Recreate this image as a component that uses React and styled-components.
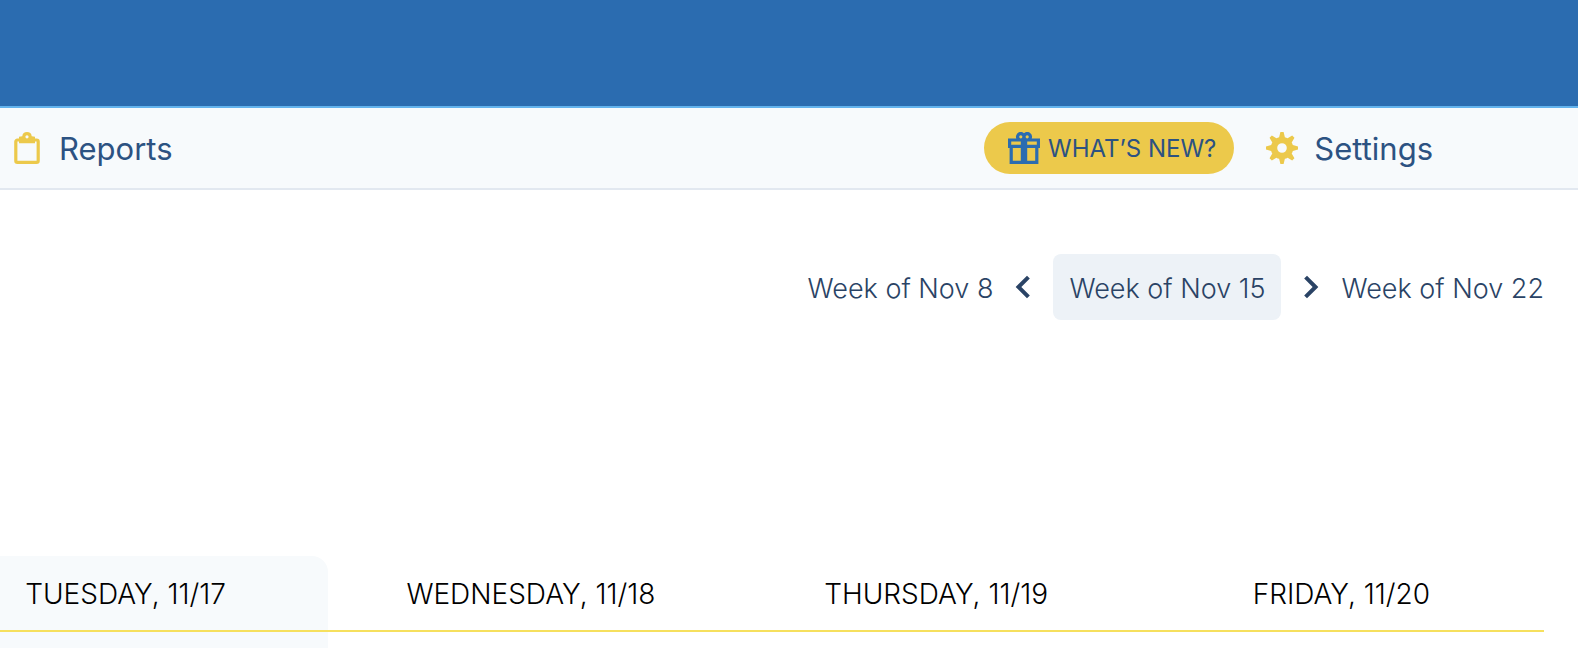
import React from "react";
import styled, { createGlobalStyle } from "styled-components";

const GlobalStyle = createGlobalStyle`
  *, *::before, *::after { box-sizing: border-box; }
  body {
    margin: 0;
    background: #fff;
    color: #000;
    font-family: Inter, "Liberation Sans", sans-serif;
    line-height: 1.5;
  }
  a { color: inherit; text-decoration: none; }
`;

const Page = styled.div`
  height: 100vh;
  display: flex;
  flex-direction: column;
  overflow: hidden;
`;

const Banner = styled.header`
  flex: none;
  height: 108px;
  background: #2b6cb0;
  border-bottom: 2px solid #63b3ed;
`;

const NavBar = styled.nav`
  flex: none;
  display: flex;
  align-items: center;
  justify-content: space-between;
  height: 82px;
  padding: 0 145px 0 11px;
  background: #f7fafc;
  border-bottom: 2px solid #e2e8f0;
`;

const NavGroup = styled.div`
  display: flex;
  align-items: center;
  gap: 32px;
`;

const NavLink = styled.a`
  display: flex;
  align-items: center;
  gap: 16px;
  color: #2c5282;
  font-size: 31px;
  line-height: 48px;
`;

const Label = styled.span`
  padding-top: 2px;
`;

const Icon = styled.svg.attrs({ viewBox: "0 0 20 20", "aria-hidden": true })`
  flex: none;
  width: ${({ $size = 32 }) => $size}px;
  height: ${({ $size = 32 }) => $size}px;
  fill: ${({ $color = "currentColor" }) => $color};
`;

const NewsButton = styled.button`
  display: flex;
  align-items: center;
  gap: 8px;
  height: 52px;
  padding: 0 18px 0 24px;
  border: 0;
  border-radius: 26px;
  background: #ecc94b;
  color: #2c5282;
  font: inherit;
  font-size: 24px;
  text-transform: uppercase;
  white-space: nowrap;
`;

const Main = styled.main`
  flex: 1;
  display: flex;
  flex-direction: column;
  padding: 64px 34px 0 0;
`;

const WeekPicker = styled.div`
  display: flex;
  align-items: center;
  justify-content: flex-end;
  gap: 10px;
  margin-bottom: 236px;
  color: #2a4365;
  font-size: 27px;
  font-weight: 300;
  line-height: 40px;
  white-space: nowrap;
`;

const WeekLink = styled.a`
  padding: 15px 0 11px;
`;

const CurrentWeek = styled.span`
  padding: 15px 16px 11px;
  border-radius: 8px;
  background: #edf2f7;
`;

const Schedule = styled.div`
  flex: 1;
  display: flex;
  margin-left: -77px;
`;

const DayTable = styled.table`
  width: 100%;
  table-layout: fixed;
  border-collapse: separate;
  border-spacing: 0;
`;

const DayHeading = styled.th`
  height: 76px;
  padding: 17px 0 15px;
  border-bottom: 2px solid #f6e05e;
  border-top-right-radius: ${({ $today }) => ($today ? "16px" : "0")};
  background: ${({ $today }) => ($today ? "#f7fafc" : "transparent")};
  font-size: 28px;
  font-weight: 300;
  line-height: 42px;
  text-align: center;
  text-transform: uppercase;
  white-space: nowrap;
`;

const DayCell = styled.td`
  padding: 0;
  background: ${({ $today }) => ($today ? "#f7fafc" : "transparent")};
`;

const days = [
  { label: "Tuesday, 11/17", today: true },
  { label: "Wednesday, 11/18" },
  { label: "Thursday, 11/19" },
  { label: "Friday, 11/20" },
];

export default function App() {
  return (
    <Page>
      <GlobalStyle />
      <Banner />
      <NavBar>
        <NavLink href="#reports">
          <Icon $color="#ecc94b">
            <path d="M7.03 2.6a3 3 0 0 1 5.94 0L15 3v1h1a2 2 0 0 1 2 2v12a2 2 0 0 1-2 2H4a2 2 0 0 1-2-2V6c0-1.1.9-2 2-2h1V3l2.03-.4zM5 6H4v12h12V6h-1v1H5V6zm5-2a1 1 0 1 0 0-2 1 1 0 0 0 0 2z" />
          </Icon>
          <Label>Reports</Label>
        </NavLink>
        <NavGroup>
          <NewsButton type="button">
            <Icon $color="#2b6cb0">
              <path d="M14.83 4H20v6h-1v10H1V10H0V4h5.17A3 3 0 0 1 10 .76 3 3 0 0 1 14.83 4zM8 10H3v8h5v-8zm4 0v8h5v-8h-5zM8 6H2v2h6V6zm4 0v2h6V6h-6zM8 4a1 1 0 1 0 0-2 1 1 0 0 0 0 2zm4 0a1 1 0 1 0 0-2 1 1 0 0 0 0 2z" />
            </Icon>
            <Label>What’s new?</Label>
          </NewsButton>
          <NavLink href="#settings">
            <Icon $color="#ecc94b">
              <path d="M3.94 6.5L2.22 3.64l1.42-1.42L6.5 3.94c.52-.3 1.1-.54 1.7-.7L9 0h2l.8 3.24c.6.16 1.18.4 1.7.7l2.86-1.72 1.42 1.42-1.72 2.86c.3.52.54 1.1.7 1.7L20 9v2l-3.24.8c-.16.6-.4 1.18-.7 1.7l1.72 2.86-1.42 1.42-2.86-1.72c-.52.3-1.1.54-1.7.7L11 20H9l-.8-3.24c-.6-.16-1.18-.4-1.7-.7l-2.86 1.72-1.42-1.42 1.72-2.86c-.3-.52-.54-1.1-.7-1.7L0 11V9l3.24-.8c.16-.6.4-1.18.7-1.7zM10 13a3 3 0 1 0 0-6 3 3 0 0 0 0 6z" />
            </Icon>
            <Label>Settings</Label>
          </NavLink>
        </NavGroup>
      </NavBar>
      <Main>
        <WeekPicker>
          <WeekLink href="#nov-8">Week of Nov 8</WeekLink>
          <Icon $size={40}>
            <path d="M7.05 9.293L6.343 10 12 15.657l1.414-1.414L9.172 10l4.242-4.243L12 4.343z" />
          </Icon>
          <CurrentWeek>Week of Nov 15</CurrentWeek>
          <Icon $size={40}>
            <path d="M12.95 10.707l.707-.707L8 4.343 6.586 5.757 10.828 10l-4.242 4.243L8 15.657z" />
          </Icon>
          <WeekLink href="#nov-22">Week of Nov 22</WeekLink>
        </WeekPicker>
        <Schedule>
          <DayTable>
            <thead>
              <tr>
                {days.map(({ label, today }) => (
                  <DayHeading key={label} scope="col" $today={today}>
                    {label}
                  </DayHeading>
                ))}
              </tr>
            </thead>
            <tbody>
              <tr>
                {days.map(({ label, today }) => (
                  <DayCell key={label} $today={today} />
                ))}
              </tr>
            </tbody>
          </DayTable>
        </Schedule>
      </Main>
    </Page>
  );
}
